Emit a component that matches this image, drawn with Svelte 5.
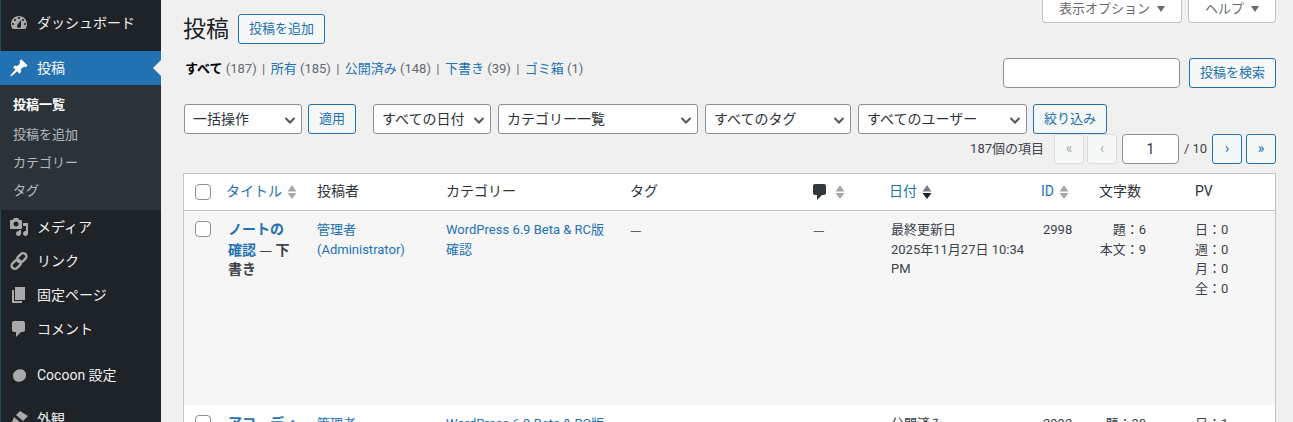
<script>
  const subItems = ['投稿を追加', 'カテゴリー', 'タグ'];
  const views = [
    { label: '所有', count: 185 },
    { label: '公開済み', count: 148 },
    { label: '下書き', count: 39 },
    { label: 'ゴミ箱', count: 1 }
  ];
  const filters = [
    { label: 'すべての日付', width: 118 },
    { label: 'カテゴリー一覧', width: 200 },
    { label: 'すべてのタグ', width: 146 },
    { label: 'すべてのユーザー', width: 169 }
  ];
</script>

{#snippet sorter(active = false)}
  <svg class="sorter" class:active width="10" height="16" viewBox="0 0 10 16" aria-hidden="true">
    <path class="up" d="M5 1l4.500 6.500h-9z" />
    <path class="down" d="M.5 9h9L5 15z" />
  </svg>
{/snippet}

{#snippet chevron()}
  <svg class="chev" width="16" height="16" viewBox="0 0 16 16" aria-hidden="true">
    <path d="M3.500 6l4.500 4.500L12.500 6" fill="none" stroke="#50575e" stroke-width="2" />
  </svg>
{/snippet}

<div class="admin">
  <nav class="menu">
    <div class="item first">
      <svg class="ico" width="20" height="20" viewBox="0 0 20 20"><path fill="#a7aaad" d="M3.760 16h12.480c1.100-1.370 1.760-3.110 1.760-5 0-4.420-3.580-8-8-8s-8 3.580-8 8c0 1.890.66 3.630 1.760 5zM10 4c.55 0 1 .45 1 1s-.45 1-1 1-1-.45-1-1 .45-1 1-1zM6 6c.55 0 1 .45 1 1s-.45 1-1 1-1-.45-1-1 .45-1 1-1zm8 0c.55 0 1 .45 1 1s-.45 1-1 1-1-.45-1-1 .45-1 1-1zm-5.370 5.550L12 7v6c0 1.100-.9 2-2 2s-2-.9-2-2c0-.57.24-1.080.63-1.450zM4 10c.55 0 1 .45 1 1s-.45 1-1 1-1-.45-1-1 .45-1 1-1zm12 0c.55 0 1 .45 1 1s-.45 1-1 1-1-.45-1-1 .45-1 1-1z" /></svg>
      <span>ダッシュボード</span>
    </div>
    <div class="item current">
      <svg class="ico" width="20" height="20" viewBox="0 0 20 20"><path fill="#fff" d="M10.440 3.020l1.820-1.820 6.360 6.350-1.830 1.820c-1.050-.68-2.480-.57-3.410.36l-.75.75c-.92.93-1.040 2.350-.35 3.410l-1.830 1.820-2.410-2.410-2.800 2.790c-.42.42-3.380 2.710-3.800 2.290s1.860-3.390 2.280-3.810l2.790-2.790L4.100 9.360l1.830-1.820c1.050.69 2.480.57 3.400-.36l.75-.75c.93-.92 1.050-2.350.36-3.410z" /></svg>
      <span>投稿</span>
    </div>
    <ul class="sub">
      <li class="on">投稿一覧</li>
      {#each subItems as sub}
        <li>{sub}</li>
      {/each}
    </ul>
    <div class="item">
      <svg class="ico" width="20" height="20" viewBox="0 0 20 20"><path fill="#a7aaad" d="M13 11V4c0-.55-.45-1-1-1h-1.670L9 1H5L3.670 3H2c-.55 0-1 .45-1 1v7c0 .55.45 1 1 1h10c.55 0 1-.45 1-1zM7 4.500c1.380 0 2.500 1.120 2.500 2.500S8.380 9.500 7 9.500 4.500 8.380 4.500 7 5.620 4.500 7 4.500zM14 6h5v10.500c0 1.380-1.120 2.500-2.500 2.500S14 17.880 14 16.500s1.120-2.500 2.500-2.500c.17 0 .34.020.5.050V9h-3V6zm-4 8.050V13h2v3.500c0 1.380-1.120 2.500-2.500 2.500S7 17.880 7 16.500 8.120 14 9.500 14c.17 0 .34.020.5.050z" /></svg>
      <span>メディア</span>
    </div>
    <div class="item">
      <svg class="ico" width="20" height="20" viewBox="0 0 20 20"><g fill="none" stroke="#a7aaad" stroke-width="2.400"><rect x="9.500" y="1.500" width="6.500" height="10.500" rx="3.250" transform="rotate(45 12.750 6.750)" /><rect x="4" y="8" width="6.500" height="10.500" rx="3.250" transform="rotate(45 7.250 13.250)" /></g></svg>
      <span>リンク</span>
    </div>
    <div class="item">
      <svg class="ico" width="20" height="20" viewBox="0 0 20 20"><path fill="#a7aaad" d="M6 15V2h10v13H6zm-1 1h8v2H3V5h2v11z" /></svg>
      <span>固定ページ</span>
    </div>
    <div class="item">
      <svg class="ico" width="20" height="20" viewBox="0 0 20 20"><path fill="#a7aaad" d="M5 2h9c1.100 0 2 .9 2 2v7c0 1.100-.9 2-2 2h-2l-5 5v-5H5c-1.100 0-2-.9-2-2V4c0-1.100.9-2 2-2z" /></svg>
      <span>コメント</span>
    </div>
    <div class="item cocoon">
      <svg class="ico" width="20" height="20" viewBox="0 0 20 20"><ellipse cx="10.500" cy="10.500" rx="6.800" ry="6.200" transform="rotate(-30 10.500 10.500)" fill="#a7aaad" /></svg>
      <span>Cocoon 設定</span>
    </div>
    <div class="item look">
      <svg class="ico" width="20" height="20" viewBox="0 0 20 20"><path fill="#a7aaad" d="M11 2l8 5-5 5-7-6zM5 8l7 6-4 4-6 1 1-6z" /></svg>
      <span>外観</span>
    </div>
  </nav>

  <main class="content">
    <div class="tabs">
      <button class="tab">表示オプション <i></i></button>
      <button class="tab">ヘルプ <i></i></button>
    </div>

    <div class="heading">
      <h1>投稿</h1>
      <a class="btn" href="#add">投稿を追加</a>
    </div>

    <div class="views-row">
      <ul class="views">
        <li><b>すべて</b> <span>(187)</span></li>
        {#each views as v}
          <li><i>|</i><a href="#v">{v.label}</a> <span>({v.count})</span></li>
        {/each}
      </ul>
      <div class="search">
        <input type="text" aria-label="search" />
        <button class="btn">投稿を検索</button>
      </div>
    </div>

    <div class="filters">
      <div class="select bulk">一括操作 {@render chevron()}</div>
      <button class="btn apply">適用</button>
      {#each filters as f}
        <div class="select" style="width: {f.width}px">{f.label} {@render chevron()}</div>
      {/each}
      <button class="btn narrow">絞り込み</button>
    </div>

    <div class="pager">
      <span class="total">187個の項目</span>
      <span class="pg off">«</span>
      <span class="pg off">‹</span>
      <input class="cur" type="text" value="1" aria-label="page" />
      <span class="of">/ 10</span>
      <span class="pg">›</span>
      <span class="pg">»</span>
    </div>

    <div class="table">
      <div class="row head">
        <div class="c check"><span class="box"></span></div>
        <div class="c title"><a href="#t">タイトル</a>{@render sorter()}</div>
        <div class="c author">投稿者</div>
        <div class="c cat">カテゴリー</div>
        <div class="c tag">タグ</div>
        <div class="c cmt">
          <svg class="bubble" width="20" height="20" viewBox="0 0 20 20"><path fill="#32373c" d="M5 2h9c1.100 0 2 .9 2 2v7c0 1.100-.9 2-2 2h-2l-5 5v-5H5c-1.100 0-2-.9-2-2V4c0-1.100.9-2 2-2z" /></svg>
          {@render sorter()}
        </div>
        <div class="c date"><a href="#d">日付</a>{@render sorter(true)}</div>
        <div class="c id"><a href="#i">ID</a>{@render sorter()}</div>
        <div class="c words">文字数</div>
        <div class="c pv">PV</div>
      </div>

      <div class="row post alt">
        <div class="c check"><span class="box"></span></div>
        <div class="c title"><p class="name"><a href="#p">ノートの<br />確認</a> <span class="dash">—</span> 下書き</p></div>
        <div class="c author"><a href="#a">管理者 (Administrator)</a></div>
        <div class="c cat"><a href="#c">WordPress 6.9 Beta &amp; RC版確認</a></div>
        <div class="c tag"><span class="dash">—</span></div>
        <div class="c cmt"><span class="dash">—</span></div>
        <div class="c date"><div class="shift">最終更新日<br />2025年11月27日 10:34 PM</div></div>
        <div class="c id"><div class="shift">2998</div></div>
        <div class="c words"><div class="ra">題：6<br />本文：9</div></div>
        <div class="c pv">日：0<br />週：0<br />月：0<br />全：0</div>
      </div>

      <div class="row post">
        <div class="c check"><span class="box"></span></div>
        <div class="c title"><p class="name"><a href="#p">アコーディオン</a></p></div>
        <div class="c author"><a href="#a">管理者</a></div>
        <div class="c cat"><a href="#c">WordPress 6.9 Beta &amp; RC版</a></div>
        <div class="c tag"></div>
        <div class="c cmt"></div>
        <div class="c date"><div class="shift">公開済み</div></div>
        <div class="c id"><div class="shift">2992</div></div>
        <div class="c words"><div class="ra">題：30</div></div>
        <div class="c pv">日：1</div>
      </div>
    </div>
  </main>
</div>

<style>
  :global(body) {
    margin: 0;
    background: #f0f0f1;
    overflow: hidden;
  }

  .admin {
    display: flex;
    height: 422px;
    overflow: hidden;
    font-family: Roboto, "Noto Sans CJK JP", sans-serif;
    font-size: 13px;
    line-height: 19.500px;
    color: #3c434a;
  }

  a {
    color: #2271b1;
    text-decoration: none;
  }

  .menu {
    width: 161px;
    flex: none;
    background: #1d2327;
    box-shadow: inset 1px 0 #24485c;
    color: #f0f0f1;
    font-size: 14px;
  }

  .item {
    display: flex;
    align-items: center;
    height: 34px;
    padding-left: 9px;
    gap: 8px;
    white-space: nowrap;
  }

  .item span {
    margin-top: 2px;
  }

  .item.first {
    margin: 6px 0 11px;
  }

  .item.current {
    position: relative;
    background: #2271b1;
    color: #fff;
  }

  .item.current::after {
    content: "";
    position: absolute;
    right: 0;
    top: 9px;
    border: 8px solid transparent;
    border-right-color: #f0f0f1;
  }

  .ico {
    flex: none;
  }

  .sub {
    list-style: none;
    margin: 0;
    padding: 5px 0 6.500px 13px;
    background: #2c3338;
    color: rgba(240, 246, 252, 0.7);
    font-size: 13px;
  }

  .sub li {
    height: 28px;
    line-height: 30px;
  }

  .sub .on {
    height: 29.500px;
    color: #fff;
    font-weight: 600;
  }

  .item.cocoon {
    margin-top: 12px;
  }

  .item.look {
    margin-top: 10px;
  }

  .content {
    flex: 1;
    min-width: 0;
    padding: 0 17px 0 23px;
    position: relative;
  }

  .tabs {
    position: absolute;
    top: -5px;
    right: 17px;
    display: flex;
    gap: 6px;
  }

  .tab {
    height: 28px;
    border: 1px solid #c3c4c7;
    border-top: none;
    border-radius: 0 0 4px 4px;
    background: #fff;
    color: #646970;
    font: inherit;
    padding: 0 16px;
    display: flex;
    align-items: center;
    gap: 7px;
  }

  .tab i {
    border: 4.500px solid transparent;
    border-top: 6px solid #646970;
    border-bottom: none;
  }

  .heading {
    display: flex;
    align-items: center;
    gap: 9px;
    height: 30px;
    padding-top: 14px;
  }

  h1 {
    margin: 0 0 0 -1px;
    height: 30px;
    font-size: 23px;
    font-weight: 400;
    color: #1d2327;
    line-height: 32px;
  }

  .btn {
    display: inline-flex;
    align-items: center;
    justify-content: center;
    box-sizing: border-box;
    height: 30px;
    border: 1px solid #2271b1;
    border-radius: 3px;
    background: #f6f7f7;
    color: #2271b1;
    font: inherit;
    padding: 0 10px;
    white-space: nowrap;
  }

  .views-row {
    display: flex;
    justify-content: space-between;
    align-items: flex-start;
    margin-top: 14px;
  }

  .views {
    list-style: none;
    display: flex;
    margin: 0;
    padding: 1px 0 0 1px;
    color: #646970;
    font-size: 13px;
    line-height: 20px;
  }

  .views b {
    color: #000;
    font-weight: 600;
  }

  .views i {
    font-style: normal;
    color: #646970;
    margin: 0 5.400px;
  }

  .search {
    display: flex;
    gap: 9px;
  }

  .search input {
    width: 177px;
    height: 30px;
    box-sizing: border-box;
    border: 1px solid #8c8f94;
    border-radius: 4px;
    background: #fff;
  }

  .filters {
    display: flex;
    align-items: center;
    margin-top: 16px;
    gap: 7px;
  }

  .select {
    position: relative;
    box-sizing: border-box;
    height: 30px;
    line-height: 28px;
    border: 1px solid #8c8f94;
    border-radius: 3px;
    background: #fff;
    color: #2c3338;
    font-size: 14px;
    padding: 0 8px;
    white-space: nowrap;
  }

  .bulk {
    width: 118px;
  }

  .chev {
    position: absolute;
    right: 3px;
    top: 7px;
  }

  .apply {
    width: 48px;
    margin: 0 10px 0 -1px;
  }

  .narrow {
    width: 74px;
    margin-left: -1px;
  }

  .pager {
    display: flex;
    justify-content: flex-end;
    align-items: center;
    gap: 4px;
    height: 30px;
  }

  .total {
    margin-right: 6px;
  }

  .pg {
    box-sizing: border-box;
    width: 30px;
    height: 30px;
    display: flex;
    align-items: center;
    justify-content: center;
    border: 1px solid #2271b1;
    border-radius: 3px;
    background: #f6f7f7;
    color: #2271b1;
    font-size: 14px;
  }

  .pg.off {
    border-color: #dcdcde;
    color: #a7aaad;
  }

  .pg.off + .pg.off {
    margin-left: -1px;
  }

  .cur {
    box-sizing: border-box;
    width: 57px;
    height: 30px;
    border: 1px solid #8c8f94;
    border-radius: 4px;
    background: #fff;
    text-align: center;
    font: inherit;
    font-size: 14px;
    color: #2c3338;
    margin-left: 1px;
  }

  .of {
    width: 25px;
    text-align: center;
    white-space: nowrap;
  }

  .table {
    margin: 9px 0 0 -1px;
    border: 1px solid #c3c4c7;
    background: #fff;
  }

  .row {
    display: flex;
  }

  .head {
    height: 36px;
    align-items: center;
    border-bottom: 1px solid #c3c4c7;
    color: #2c3338;
    font-size: 14px;
  }

  .head .c {
    display: flex;
    align-items: center;
    gap: 5px;
  }

  .post {
    padding-top: 9px;
  }

  .alt {
    background: #f6f6f7;
    height: 185px;
  }

  .c {
    box-sizing: border-box;
    flex: none;
    padding-left: 2px;
  }

  .check {
    width: 40px;
    padding-left: 11px;
  }

  .post .box {
    margin-top: 1px;
  }

  .box {
    display: block;
    box-sizing: border-box;
    width: 16px;
    height: 16px;
    border: 1px solid #8c8f94;
    border-radius: 4px;
    background: #fff;
  }

  .title {
    width: 91px;
  }

  .name {
    margin: 0 0 0 2px;
    font-size: 14px;
    font-weight: 600;
    line-height: 19.600px;
    width: 70px;
  }

  .dash {
    font-family: "Noto Sans CJK JP", sans-serif;
    font-weight: 400;
  }

  .author {
    width: 129px;
    padding-right: 20px;
  }

  .cat {
    width: 184px;
    padding-right: 20px;
  }

  .tag {
    width: 183px;
  }

  .cmt {
    width: 76px;
  }

  .bubble {
    margin-left: -3px;
  }

  .date {
    width: 152px;
    padding-right: 10px;
  }

  .shift {
    margin-left: 2px;
  }

  .id {
    width: 58px;
  }

  .words {
    width: 96px;
  }

  .ra {
    width: 47px;
    text-align: right;
    white-space: nowrap;
  }

  .pv {
    width: 80px;
  }

  .sorter .up,
  .sorter .down {
    fill: #a7aaad;
  }

  .sorter.active .up {
    fill: #787c82;
  }

  .sorter.active .down {
    fill: #1d2327;
  }
</style>
